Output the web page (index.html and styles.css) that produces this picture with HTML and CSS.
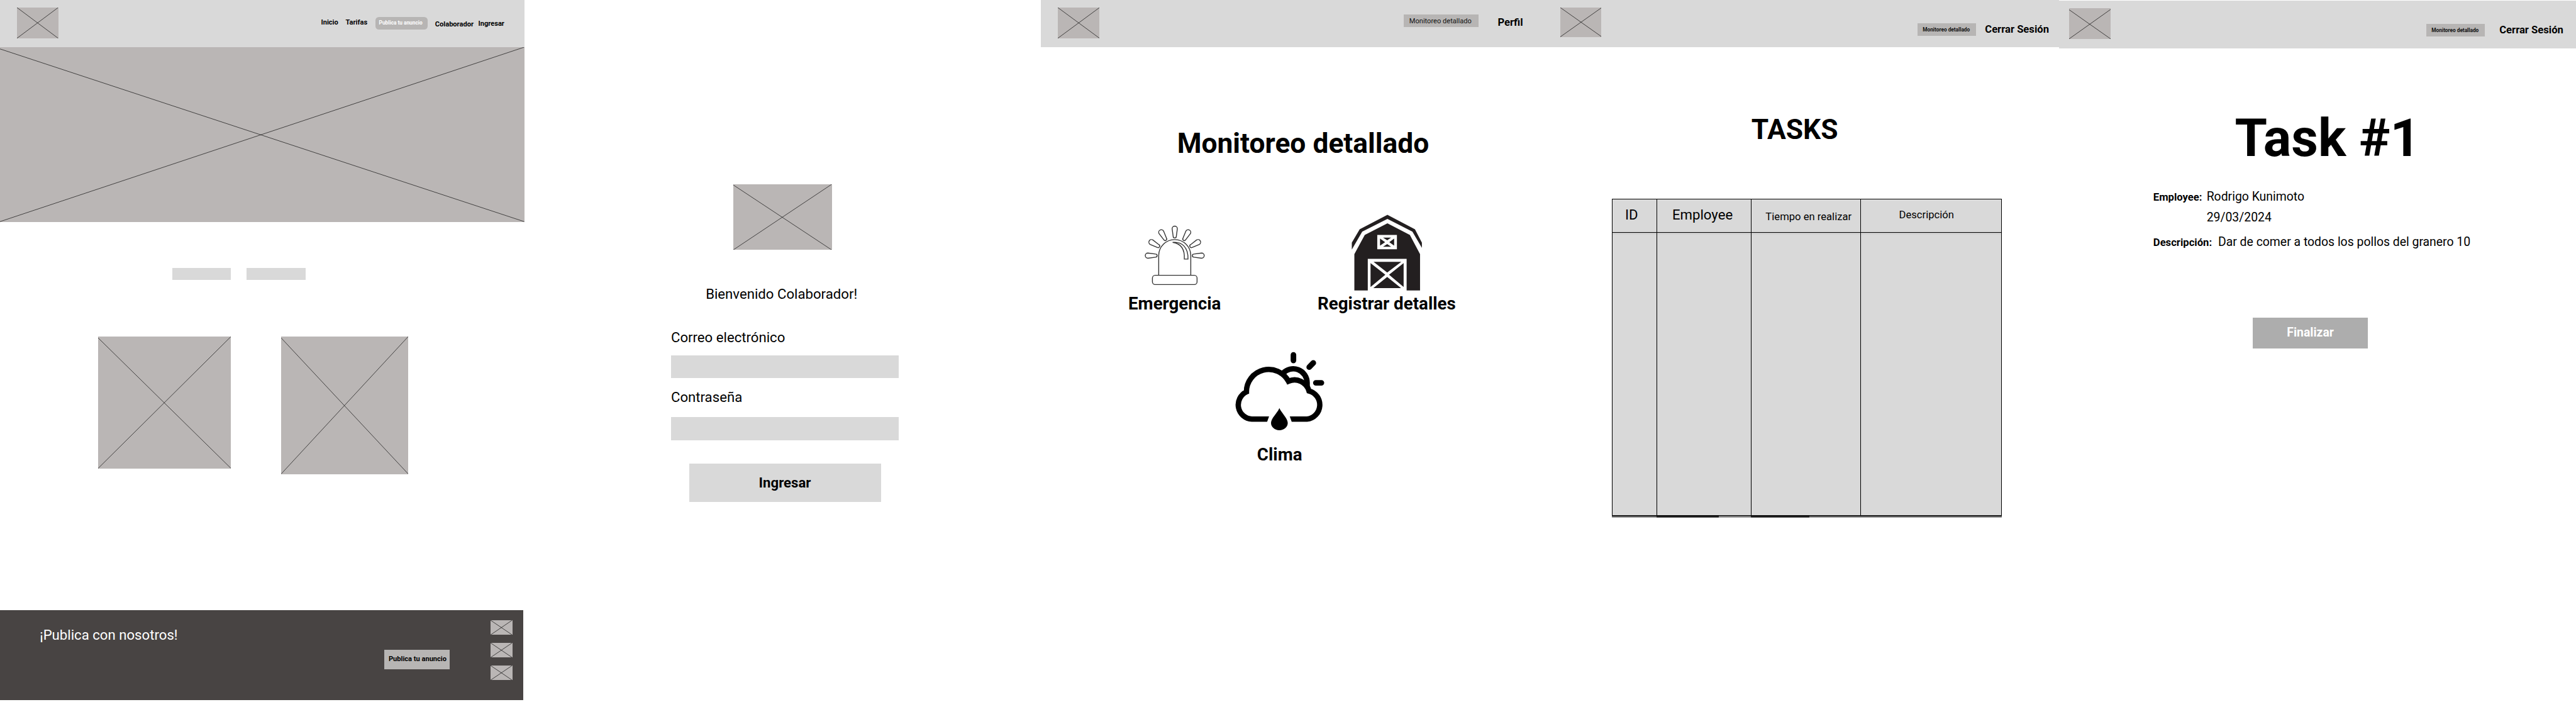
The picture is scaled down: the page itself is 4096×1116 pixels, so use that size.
FILE: index.html
```html
<!DOCTYPE html>
<html lang="es">
<head>
<meta charset="utf-8">
<title>Wireframes</title>
<link rel="stylesheet" href="styles.css">
</head>
<body>
<main class="board">

  <section class="screen home">
    <header class="bar home-bar">
      <svg class="ph home-logo" viewBox="0 0 100 100" preserveAspectRatio="none"><path d="M0 0L100 100M0 100L100 0"/></svg>
      <span class="link">Inicio</span>
      <span class="link">Tarifas</span>
      <span class="pill">Publica tu anuncio</span>
      <span class="link link-low">Colaborador</span>
      <span class="link link-mid">Ingresar</span>
    </header>
    <svg class="ph hero" viewBox="0 0 100 100" preserveAspectRatio="none"><path d="M0 1L100 100M0 100L100 0"/></svg>
    <div class="tabs"><div class="tab"></div><div class="tab"></div></div>
    <div class="cards">
      <svg class="ph card-a" viewBox="0 0 100 100" preserveAspectRatio="none"><path d="M0 1L100 100M0 100L100 0"/></svg>
      <svg class="ph card-b" viewBox="0 0 100 100" preserveAspectRatio="none"><path d="M0 1L100 100M0 100L100 0"/></svg>
    </div>
    <footer class="footer">
      <p class="footer-title">¡Publica con nosotros!</p>
      <div class="footer-button">Publica tu anuncio</div>
      <div class="socials">
        <svg class="ph social" viewBox="0 0 100 100" preserveAspectRatio="none"><path d="M0 0L100 100M0 100L100 0"/></svg>
        <svg class="ph social" viewBox="0 0 100 100" preserveAspectRatio="none"><path d="M0 0L100 100M0 100L100 0"/></svg>
        <svg class="ph social" viewBox="0 0 100 100" preserveAspectRatio="none"><path d="M0 0L100 100M0 100L100 0"/></svg>
      </div>
    </footer>
  </section>

  <section class="screen login">
    <svg class="ph login-logo" viewBox="0 0 100 100" preserveAspectRatio="none"><path d="M0 1L100 100M0 100L100 0"/></svg>
    <p class="welcome">Bienvenido Colaborador!</p>
    <form class="form">
      <label class="label">Correo electrónico</label>
      <div class="input"></div>
      <label class="label label-second">Contraseña</label>
      <div class="input input-second"></div>
      <div class="submit">Ingresar</div>
    </form>
  </section>

  <section class="screen monitor">
    <header class="bar monitor-bar">
      <svg class="ph monitor-logo" viewBox="0 0 100 100" preserveAspectRatio="none"><path d="M0 0L100 100M0 100L100 0"/></svg>
      <span class="chip">Monitoreo detallado</span>
      <span class="profile">Perfil</span>
    </header>
    <h1 class="monitor-title">Monitoreo detallado</h1>
    <div class="features">
      <div class="feature">
        <svg class="siren" viewBox="98 64 180 176">
          <defs><path id="ray" d="M180.5 76a7.5 7.5 0 0 1 15 0L192.5 98a4.5 4.5 0 0 1-9 0Z"/></defs>
          <path d="M142 209V153A46 46 0 0 1 234 153V209"/>
          <rect x="124" y="209.5" width="128" height="26.5" rx="8"/>
          <path d="M182 115C209 112 227 130 226 163H215.500C217 137 209 119 182 115Z"/>
          <use href="#ray"/>
          <use href="#ray" transform="rotate(30 188 153)"/>
          <use href="#ray" transform="rotate(60 188 153)"/>
          <use href="#ray" transform="rotate(90 188 153)"/>
          <use href="#ray" transform="rotate(-30 188 153)"/>
          <use href="#ray" transform="rotate(-60 188 153)"/>
          <use href="#ray" transform="rotate(-90 188 153)"/>
        </svg>
        <span class="feature-name">Emergencia</span>
      </div>
      <div class="feature feature-wide">
        <svg class="barn" viewBox="1045 66 312 446" preserveAspectRatio="none">
          <path d="M1203 71L1322 155L1352 232V262L1311 168L1203 95L1094 168L1049 272V232L1083 155Z"/>
          <path d="M1060 298L1105 187L1203 120L1300 187L1344 298V507H1286V325H1118V507H1060Z"/>
          <path class="cut" d="M1159 187H1244V270H1159Z"/>
          <path d="M1184 203H1219L1202 218ZM1184 255H1219L1202 240ZM1171 208L1193 229L1171 249ZM1232 208L1211 229L1232 249Z"/>
          <path d="M1143 342H1263L1202 404ZM1130 350L1194 417L1130 487ZM1273 350L1210 417L1273 487ZM1202 429L1262 494H1142Z"/>
        </svg>
        <span class="feature-name">Registrar detalles</span>
      </div>
    </div>
    <div class="feature feature-clima">
      <svg class="cloud" viewBox="355 425 268 235">
        <path class="line" d="M499 491A40 40 0 0 1 568.600 518V528"/>
        <path class="line" d="M410 622A41 41 0 0 1 394.500 544A64 64 0 0 1 515 513.500A43 43 0 0 1 574 541.500A41 41 0 0 1 568 622Z"/>
        <path class="cut" d="M460.300 612L453 632H525L518 612Z"/>
        <path class="drop" d="M489 590.500C494 603 513 620 513 633A24 21 0 0 1 465 633C465 620 484 603 489 590.500Z"/>
        <path class="beam" d="M529.300 438V454M574.500 473L586.300 461M593.500 518H609.500"/>
      </svg>
      <span class="feature-name">Clima</span>
    </div>
  </section>

  <section class="screen tasks">
    <header class="bar tasks-bar">
      <svg class="ph tasks-logo" viewBox="0 0 100 100" preserveAspectRatio="none"><path d="M0 0L100 100M0 100L100 0"/></svg>
      <span class="chip chip-small">Monitoreo detallado</span>
      <span class="logout">Cerrar Sesión</span>
    </header>
    <h1 class="tasks-title">TASKS</h1>
    <div class="table">
      <div class="cell head head-id">ID</div>
      <div class="cell head head-employee">Employee</div>
      <div class="cell head head-time">Tiempo en realizar</div>
      <div class="cell head head-description">Descripción</div>
      <div class="cell"></div>
      <div class="cell"></div>
      <div class="cell"></div>
      <div class="cell"></div>
    </div>
    <div class="table-shadow">
      <i class="shade"></i><i class="shade shade-dark"></i><i class="shade shade-light"></i><i class="shade shade-dark"></i><i class="shade"></i>
    </div>
  </section>

  <section class="screen task">
    <header class="bar task-bar">
      <svg class="ph task-logo" viewBox="0 0 100 100" preserveAspectRatio="none"><path d="M0 5L100 100M0 100L100 4"/></svg>
      <span class="chip chip-small">Monitoreo detallado</span>
      <span class="logout">Cerrar Sesión</span>
    </header>
    <h1 class="task-title">Task #1</h1>
    <div class="row row-employee"><b class="key">Employee:</b><span>Rodrigo Kunimoto</span></div>
    <div class="row row-date"><b class="key"></b><span>29/03/2024</span></div>
    <div class="row row-description"><b class="key key-wide">Descripción:</b><span>Dar de comer a todos los pollos del granero 10</span></div>
    <div class="finish">Finalizar</div>
  </section>

</main>
</body>
</html>
```
FILE: styles.css
```css
/* 1rem is 100 units of the 7386-unit-wide board */
html { font-size: calc(100vw / 73.86); }
body {
  margin: 0;
  background: #fff;
  color: #000;
  font-family: Roboto, "Liberation Sans", sans-serif;
  line-height: 1;
  overflow: hidden;
}
h1, p { margin: 0; font-size: inherit; font-weight: inherit; }
.board {
  display: grid;
  grid-template-columns: 15.03rem 14.81rem 14.4rem 14.805rem 14.815rem;
  height: 20.12rem;
  white-space: nowrap;
}
.screen { display: flex; flex-direction: column; align-items: flex-start; min-width: 0; }

.ph { display: block; flex: none; background: #bab6b5; }
.ph path { fill: none; stroke: #000; stroke-width: 0.65px; vector-effect: non-scaling-stroke; }

.bar {
  display: grid;
  align-items: start;
  justify-items: start;
  box-sizing: border-box;
  width: 100%;
  height: 1.36rem;
  background: #d9d9d9;
}

/* Home */
.home-bar { grid-template-columns: 8.71rem 0.705rem 0.85rem 1.715rem 1.24rem auto; padding-left: 0.495rem; }
.home-logo { width: 1.18rem; height: 0.88rem; margin-top: 0.22rem; }
.link { margin-top: 0.537rem; font-size: 0.2rem; font-weight: 700; }
.link-low { margin-top: 0.587rem; }
.link-mid { margin-top: 0.574rem; }
.pill {
  box-sizing: border-box;
  width: 1.503rem;
  height: 0.37rem;
  margin-top: 0.48rem;
  padding: 0.095rem 0 0 0.107rem;
  border-radius: 0.1rem;
  background: #b7b5b4;
  color: #fff;
  font-size: 0.15rem;
  font-weight: 700;
}
.hero { width: 100%; height: 5rem; }
.tabs { display: flex; gap: 0.447rem; margin: 1.33rem 0 0 4.934rem; }
.tab { width: 1.69rem; height: 0.34rem; background: #d9d9d9; }
.cards { display: flex; align-items: flex-start; gap: 1.445rem; margin: 1.62rem 0 0 2.81rem; }
.card-a { width: 3.81rem; height: 3.78rem; }
.card-b { width: 3.645rem; height: 3.94rem; }
.footer {
  display: grid;
  grid-template-columns: 9.88rem 3.05rem auto;
  align-items: start;
  box-sizing: border-box;
  width: 15rem;
  height: 2.58rem;
  margin-top: 3.91rem;
  padding-left: 1.14rem;
  background: #484443;
}
.footer-title { margin-top: 0.497rem; color: #fff; font-size: 0.4rem; }
.footer-button {
  box-sizing: border-box;
  width: 1.88rem;
  height: 0.56rem;
  margin-top: 1.13rem;
  padding: 0.165rem 0 0 0.122rem;
  background: #b7b5b4;
  font-size: 0.2rem;
  font-weight: 700;
}
.socials { display: flex; flex-direction: column; gap: 0.23rem; margin-top: 0.28rem; }
.social { width: 0.62rem; height: 0.42rem; }

/* Login */
.login-logo { width: 2.82rem; height: 1.88rem; margin: 5.28rem 0 0 6rem; }
.welcome { margin: 1.064rem 0 0 5.205rem; font-size: 0.4rem; }
.form { display: flex; flex-direction: column; width: 6.53rem; margin: 0.844rem 0 0 4.21rem; }
.label { font-size: 0.4rem; }
.label-second { margin-top: 0.34rem; }
.input { height: 0.656rem; margin-top: 0.322rem; background: #d9d9d9; }
.input-second { margin-top: 0.376rem; }
.submit {
  box-sizing: border-box;
  align-self: center;
  width: 5.5rem;
  height: 1.085rem;
  margin-top: 0.68rem;
  padding-top: 0.341rem;
  background: #d9d9d9;
  font-size: 0.4rem;
  font-weight: 700;
  text-align: center;
}

/* Monitoring */
.monitor-bar { grid-template-columns: 9.92rem 2.695rem auto; padding-left: 0.487rem; }
.monitor-logo { width: 1.196rem; height: 0.88rem; margin-top: 0.22rem; }
.chip {
  box-sizing: border-box;
  width: 2.152rem;
  height: 0.36rem;
  margin-top: 0.42rem;
  padding: 0.077rem 0 0 0.16rem;
  background: #b7b5b4;
  color: #111;
  font-size: 0.2rem;
}
.chip-small {
  width: 1.673rem;
  margin-top: 0.66rem;
  padding: 0.119rem 0 0 0.15rem;
  font-size: 0.15rem;
  font-weight: 700;
}
.profile { margin-top: 0.498rem; font-size: 0.3rem; font-weight: 700; }
.monitor-title { margin: 2.347rem 0 0 3.91rem; font-size: 0.8rem; font-weight: 700; }
.features { display: flex; align-items: flex-end; gap: 2.5rem; height: 2.84rem; margin: 1.613rem 0 0 2.34rem; }
.feature { display: flex; flex-direction: column; align-items: center; width: 3rem; }
.feature-wide { width: 4.16rem; }
.feature-clima { margin: 1.09rem 0 0 5.35rem; }
.feature-name { font-size: 0.5rem; font-weight: 700; }
.siren { width: 1.8rem; height: 1.76rem; margin-bottom: 0.26rem; fill: none; stroke: #333; stroke-width: 2.5; }
.barn { width: 2.069rem; height: 2.219rem; margin-bottom: 0.113rem; fill: #231f20; }
.cloud { width: 2.68rem; height: 2.35rem; margin-bottom: 0.392rem; }
.cut { fill: #fff; }
.line { fill: #fff; stroke: #000; stroke-width: 15.4; }
.drop { fill: #000; }
.beam { stroke: #000; stroke-width: 16; stroke-linecap: round; }

/* Task list */
.tasks-bar { grid-template-columns: 10.25rem 1.935rem auto; padding-left: 0.49rem; }
.tasks-logo { width: 1.188rem; height: 0.84rem; margin-top: 0.22rem; }
.logout { margin-top: 0.698rem; font-size: 0.3rem; font-weight: 700; }
.tasks-title { margin: 1.967rem 0 0 5.975rem; font-size: 0.8rem; font-weight: 700; }
.table {
  display: grid;
  grid-template-columns: 1.27rem 2.717rem 3.13rem 4.04rem;
  grid-template-rows: 0.95rem 8.113rem;
  margin: 1.569rem 0 0 1.984rem;
  border: solid #000;
  border-width: 1px 1px 1px 0;
  box-sizing: border-box;
  background: #d9d9d9;
}
.cell { box-sizing: border-box; border-left: 1px solid #000; box-shadow: inset 0 2px 2px rgba(0, 0, 0, 0.07); }
.head { border-bottom: 1px solid #000; box-shadow: none; font-size: 0.3rem; }
.head-id { padding: 0.238rem 0 0 0.355rem; font-size: 0.4rem; }
.head-employee { padding: 0.238rem 0 0 0.435rem; font-size: 0.4rem; }
.head-time { padding: 0.361rem 0 0 0.395rem; }
.head-description { padding: 0.304rem 0 0 1.09rem; }
.table-shadow { display: grid; grid-template-columns: 1.27rem 1.78rem 0.937rem 1.674rem 5.506rem; margin-left: 1.984rem; }
.shade { height: 0.03rem; background: #555; box-shadow: 0 1px 1px rgba(0, 0, 0, 0.35); }
.shade-dark { background: #1a1a1a; box-shadow: 0 1px 1px rgba(0, 0, 0, 0.7); }
.shade-light { background: #777; }

/* Task detail */
.task-bar { grid-template-columns: 10.247rem 2.095rem auto; margin-top: 0.02rem; padding-left: 0.278rem; }
.task-logo { width: 1.19rem; height: 0.88rem; margin-top: 0.22rem; }
.task-title { margin: 1.835rem 0 0 5.032rem; font-size: 1.5rem; font-weight: 700; }
.row { display: flex; align-items: baseline; height: 0.35rem; margin-left: 2.695rem; font-size: 0.35rem; }
.key { width: 1.53rem; font-size: 0.3rem; font-weight: 700; }
.key-wide { width: 1.86rem; }
.row-employee { margin-top: 0.758rem; }
.row-date { margin-top: 0.229rem; }
.row-description { margin-top: 0.37rem; }
.finish {
  box-sizing: border-box;
  width: 3.29rem;
  height: 0.885rem;
  margin: 1.98rem 0 0 5.554rem;
  padding-top: 0.258rem;
  background: #adadad;
  color: #fff;
  font-size: 0.35rem;
  font-weight: 700;
  text-align: center;
}
```
